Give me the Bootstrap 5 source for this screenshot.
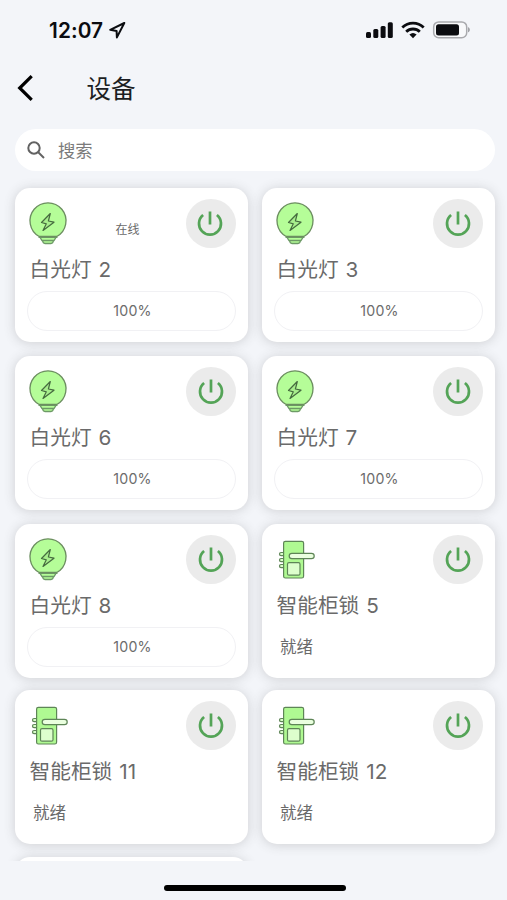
<!DOCTYPE html>
<html lang="zh-CN">
<head>
<meta charset="utf-8">
<meta name="viewport" content="width=device-width, initial-scale=1">
<title>设备</title>
<link href="https://cdn.jsdelivr.net/npm/bootstrap@5.3.0/dist/css/bootstrap.min.css" rel="stylesheet">
<style>
body{background:#f3f5f9;font-family:Inter,"Noto Sans CJK SC",sans-serif;color:#6a6a6a}
.screen{height:900px}
.status-bar{height:60px;padding:0 37px 0 49px;color:#0b0c10}
.clock{font-size:20.8px;font-weight:600;letter-spacing:.1px;line-height:60px;padding-top:1px}
.locate{margin-left:5px}
.title-bar{height:56px;padding-left:17px;color:#1c1e22}
.title-bar h1{font-size:24.500px;font-weight:400;line-height:56px;margin:2px 0 0 51.500px}
.search-box{height:42px;margin:13px 12px 0 15px;padding-left:12px;background:#fff;font-size:17.300px;color:#7b7b7b}
.search-hint{padding:2px 0 0 13px}
.device-list{height:690px;padding:17px 12px 0 15px}
.device-grid{display:grid;grid-template-columns:233px 233px;column-gap:14px;row-gap:14px}
.device{height:154px;border:0;border-radius:15px;padding:11px 12px;box-shadow:0 1px 12px rgba(60,60,60,.2)}
.raised{margin-top:-2px}
.next-row{margin-top:-1px}
.device-head{height:50px}
.device-icon{margin:0}
.lock-icon{margin:-1px 0 0 2px}
.power{width:50px;height:49px;margin-top:-1px;border:0;background:#ebebeb;color:#54a457}
.power svg{margin:-2px 0 0 -1px}
.device-name{font-size:20.700px;font-weight:400;line-height:42px;height:42px;padding-left:2.500px;margin:0;color:#6a6a6a;white-space:nowrap;word-spacing:1.200px}
.level{height:40px;border:1px solid #f1f1f4;font-size:14.200px;letter-spacing:.25px;padding-left:2px;color:#6c6c6c}
.state{font-size:16.5px;line-height:40px;padding-left:6px}
.online{font-size:12px;line-height:16px;margin:12px 0 0 0}
.home-area{height:39px}
.home-bar{width:182px;height:6px;margin:24px 0 0 2px;background:#000}
</style>
<script src="https://cdn.jsdelivr.net/npm/bootstrap@5.3.0/dist/js/bootstrap.bundle.min.js"></script>
</head>
<body>
<svg class="d-none" aria-hidden="true">
  <symbol id="bulb" viewBox="0 0 42 44">
    <path d="M11.5 35.3h19M13 35.3l2 3.2h12l2-3.2M15.5 38.5c.3 2 1 3 2.500 3h6c1.500 0 2.200-1 2.500-3" fill="#b5fd98" stroke="#6d9a66" stroke-width="1.300"/>
    <path d="M12.200 34.500A18 18 0 1 1 29.800 34.500z" fill="#b5fd98" stroke="#6c8e60" stroke-width="1.300"/>
    <path d="M23.300 11.500L14.500 20.500l4.800 1.300-3.300 6.600 11-8.200-5.600-1.200z" fill="#a7ee8c" stroke="#466b3f" stroke-width="1.200" stroke-linejoin="round"/>
  </symbol>
  <symbol id="lock" viewBox="0 0 42 44">
    <g stroke="#5e8557" stroke-width="1.200">
      <g fill="#d8ffc8"><rect x="3.500" y="14.500" width="6" height="3.200" rx="1.600"/><rect x="3.500" y="20.500" width="6" height="3.200" rx="1.600"/><rect x="3.500" y="26.500" width="6" height="3.200" rx="1.600"/></g>
      <rect x="7.600" y="3.300" width="20" height="36.700" rx="1.800" fill="#aff992"/>
      <rect x="13.200" y="15.300" width="25" height="5.400" rx="2.700" fill="#eaffdf"/>
      <rect x="11.500" y="24.700" width="12.500" height="12.500" rx="1.500" fill="#ddffcd"/>
    </g>
  </symbol>
  <symbol id="power" viewBox="0 0 28 28">
    <path d="M14 2.500v13M7.100 6A11 11 0 1 0 20.900 6" fill="none" stroke="currentColor" stroke-width="2.700"/>
  </symbol>
</svg>
<div class="screen d-flex flex-column overflow-hidden">
  <div class="status-bar d-flex align-items-center justify-content-between">
    <div class="d-flex align-items-center"><span class="clock">12:07</span>
      <svg class="locate" width="19" height="19" viewBox="0 0 19 19"><path d="M16.300 2L2.200 8.800l6.400 1.300.3 6.300z" fill="none" stroke="currentColor" stroke-width="2" stroke-linejoin="round"/></svg>
    </div>
    <svg width="106" height="20" viewBox="0 0 106 20" fill="#0b0c10">
      <rect x="2" y="12" width="5" height="6" rx="1.500"/><rect x="9.300" y="9" width="5" height="9" rx="1.500"/><rect x="16.600" y="6" width="5" height="12" rx="1.500"/><rect x="23.800" y="2.200" width="5" height="15.800" rx="1.500"/>
      <g fill="none" stroke="#0b0c10" stroke-width="2.800"><path d="M38.300 7.500a15.500 15.500 0 0 1 21.400 0"/><path d="M42.200 11.800a9.700 9.700 0 0 1 13.600 0"/></g><path d="M45.400 14.500a5.500 5.500 0 0 1 7.200 0L49 18.300z"/>
      <rect x="69.700" y="1.900" width="33" height="15.800" rx="5" fill="#f8f9fb" stroke="#a9aaae" stroke-width="1.500"/><rect x="72" y="4.200" width="23" height="11.300" rx="2.500"/><path d="M104.200 7.300c2 .6 2 4.400 0 5z" fill="#8f9094"/>
    </svg>
  </div>
  <header class="title-bar d-flex align-items-center">
    <svg width="18" height="28" viewBox="0 0 18 28"><path d="M14.700 2.200L2.700 14l12 11.800" fill="none" stroke="#000" stroke-width="3.200"/></svg>
    <h1>设备</h1>
  </header>
  <div class="search-box rounded-pill d-flex align-items-center">
    <svg width="18" height="18" viewBox="0 0 18 18" fill="none" stroke="#626262" stroke-width="2"><circle cx="7" cy="7" r="5.700"/><path d="M11 11l6 6"/></svg>
    <span class="search-hint">搜索</span>
  </div>
  <main class="device-list overflow-hidden">
    <div class="device-grid">
      <article class="card device"><div class="device-head d-flex justify-content-between align-items-center"><svg class="device-icon" width="42" height="44"><use href="#bulb"/></svg><span class="online">在线</span><button class="power rounded-circle d-flex align-items-center justify-content-center p-0" aria-label="电源"><svg width="28" height="28"><use href="#power"/></svg></button></div><h2 class="device-name">白光灯 2</h2><div class="level rounded-pill d-flex align-items-center justify-content-center">100%</div></article>
      <article class="card device"><div class="device-head d-flex justify-content-between align-items-center"><svg class="device-icon" width="42" height="44"><use href="#bulb"/></svg><button class="power rounded-circle d-flex align-items-center justify-content-center p-0" aria-label="电源"><svg width="28" height="28"><use href="#power"/></svg></button></div><h2 class="device-name">白光灯 3</h2><div class="level rounded-pill d-flex align-items-center justify-content-center">100%</div></article>
      <article class="card device"><div class="device-head d-flex justify-content-between align-items-center"><svg class="device-icon" width="42" height="44"><use href="#bulb"/></svg><button class="power rounded-circle d-flex align-items-center justify-content-center p-0" aria-label="电源"><svg width="28" height="28"><use href="#power"/></svg></button></div><h2 class="device-name">白光灯 6</h2><div class="level rounded-pill d-flex align-items-center justify-content-center">100%</div></article>
      <article class="card device"><div class="device-head d-flex justify-content-between align-items-center"><svg class="device-icon" width="42" height="44"><use href="#bulb"/></svg><button class="power rounded-circle d-flex align-items-center justify-content-center p-0" aria-label="电源"><svg width="28" height="28"><use href="#power"/></svg></button></div><h2 class="device-name">白光灯 7</h2><div class="level rounded-pill d-flex align-items-center justify-content-center">100%</div></article>
      <article class="card device"><div class="device-head d-flex justify-content-between align-items-center"><svg class="device-icon" width="42" height="44"><use href="#bulb"/></svg><button class="power rounded-circle d-flex align-items-center justify-content-center p-0" aria-label="电源"><svg width="28" height="28"><use href="#power"/></svg></button></div><h2 class="device-name">白光灯 8</h2><div class="level rounded-pill d-flex align-items-center justify-content-center">100%</div></article>
      <article class="card device"><div class="device-head d-flex justify-content-between align-items-center"><svg class="lock-icon" width="42" height="44"><use href="#lock"/></svg><button class="power rounded-circle d-flex align-items-center justify-content-center p-0" aria-label="电源"><svg width="28" height="28"><use href="#power"/></svg></button></div><h2 class="device-name">智能柜锁 5</h2><div class="state">就绪</div></article>
      <article class="card device raised"><div class="device-head d-flex justify-content-between align-items-center"><svg class="lock-icon" width="42" height="44"><use href="#lock"/></svg><button class="power rounded-circle d-flex align-items-center justify-content-center p-0" aria-label="电源"><svg width="28" height="28"><use href="#power"/></svg></button></div><h2 class="device-name">智能柜锁 11</h2><div class="state">就绪</div></article>
      <article class="card device raised"><div class="device-head d-flex justify-content-between align-items-center"><svg class="lock-icon" width="42" height="44"><use href="#lock"/></svg><button class="power rounded-circle d-flex align-items-center justify-content-center p-0" aria-label="电源"><svg width="28" height="28"><use href="#power"/></svg></button></div><h2 class="device-name">智能柜锁 12</h2><div class="state">就绪</div></article>
      <article class="card device next-row"></article>
    </div>
  </main>
  <footer class="home-area d-flex justify-content-center"><div class="home-bar rounded-pill"></div></footer>
</div>
</body>
</html>
